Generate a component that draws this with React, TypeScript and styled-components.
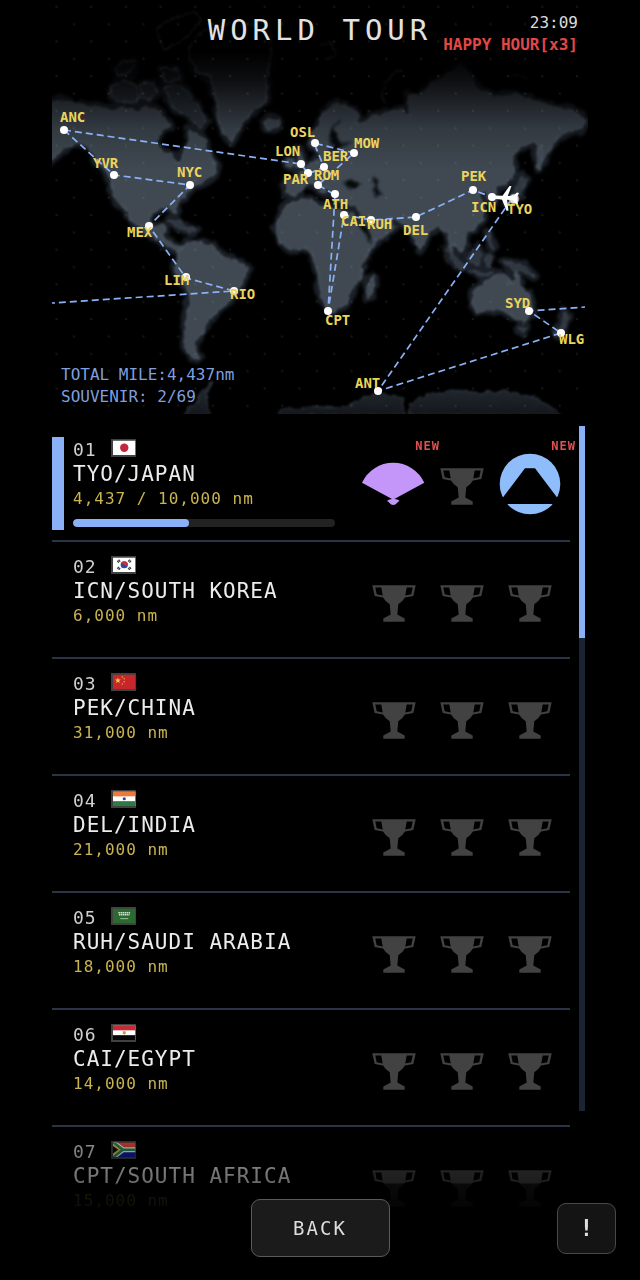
import React from "react";
import styled, { createGlobalStyle } from "styled-components";

const GlobalStyle = createGlobalStyle`
  * { box-sizing: border-box; }
  body {
    margin: 0;
    background: #000;
    color: #e6e6e6;
    font-family: "DejaVu Sans Mono", "Liberation Mono", monospace;
  }
`;

const blue = "#8ab1f8";

const Page = styled.main`
  display: flex;
  flex-direction: column;
  height: 100vh;
  padding: 0 52px 70px;
  overflow: hidden;
`;

/* The map and the text that lies on it share one grid cell. */
const MapPanel = styled.header`
  display: grid;
  grid-template-columns: minmax(0, 1fr);
  margin-bottom: 11px;
  flex: none;
  > * { grid-area: 1 / 1; }
`;

const MapArt = styled.svg`
  display: block;
  width: 100%;
  height: auto;
`;

const CityName = styled.text`
  font-size: 14px;
  font-weight: 700;
  fill: #ecd45c;
`;

const TopText = styled.div`
  position: relative;
  align-self: start;
  padding-top: 13px;
`;

const Title = styled.h1`
  margin: 0;
  font-size: 29px;
  line-height: 34px;
  font-weight: 400;
  letter-spacing: 5px;
  text-align: center;
  color: #e2e2e2;
`;

const Clock = styled.div`
  position: absolute;
  top: 12px;
  right: 10px;
  text-align: right;
  font-size: 16px;
  line-height: 22px;
  color: #dcdcdc;
`;

const HappyHour = styled.strong`
  display: block;
  color: #e04848;
`;

const Totals = styled.div`
  position: relative;
  align-self: end;
  padding: 0 0 6px 9px;
  font-size: 16px;
  line-height: 22px;
  color: #7f9fdf;
`;

const ListPanel = styled.section`
  display: grid;
  grid-template-columns: minmax(0, 1fr) 6px;
  flex: 1;
  min-height: 0;
  padding-right: 3px;
`;

const List = styled.ul`
  margin: 0;
  padding: 0 9px 0 0;
  list-style: none;
  min-height: 0;
  overflow-x: hidden;
  overflow-y: auto;
  scrollbar-width: none;
  mask-image: linear-gradient(
    to bottom,
    #000 calc(100% - 82px),
    rgba(0, 0, 0, 0.65) calc(100% - 64px),
    rgba(0, 0, 0, 0.45) calc(100% - 27px),
    rgba(0, 0, 0, 0.14) calc(100% - 26px),
    rgba(0, 0, 0, 0.08) calc(100% - 4px),
    transparent 100%
  );
`;

const ScrollTrack = styled.div`
  margin: 1px 0 99px;
  background: #1b2432;
`;

const ScrollThumb = styled.div`
  height: 31%;
  background: ${blue};
`;

const Row = styled.li`
  display: grid;
  grid-template-columns: 12px minmax(0, 1fr) auto;
  height: 117px;
  border-bottom: 2px solid #2b3346;
`;

const Marker = styled.span<{ $active: boolean }>`
  margin: 12px 0 10px;
  background: ${(p) => (p.$active ? blue : "transparent")};
`;

const Info = styled.div`
  padding: 14px 0 0 9px;
  white-space: nowrap;
`;

const Head = styled.div`
  display: flex;
  gap: 14px;
  font-size: 18px;
  line-height: 22px;
  letter-spacing: 1px;
  color: #cfcfcf;
`;

const FlagArt = styled.svg`
  width: 25px;
  height: 18px;
`;

const Name = styled.h2`
  margin: 0;
  font-size: 21px;
  line-height: 26px;
  font-weight: 400;
  letter-spacing: 1px;
  color: #ececec;
`;

const Miles = styled.div`
  font-size: 16px;
  line-height: 24px;
  letter-spacing: 1px;
  color: #c9b450;
`;

const Bar = styled.div`
  width: 262px;
  max-width: 100%;
  height: 8px;
  margin-top: 8px;
  border-radius: 4px;
  background: #222;
  overflow: hidden;
`;

const BarFill = styled.div`
  height: 100%;
  border-radius: 4px;
  background: ${blue};
`;

const Souvenirs = styled.div`
  display: flex;
  padding: 27px 6px 0 0;
`;

const Slot = styled.span`
  position: relative;
  width: 68px;
  height: 64px;
  display: grid;
  justify-items: center;
`;

const Icon = styled.svg`
  width: 64px;
  height: 64px;
`;

const NewBadge = styled.b`
  position: absolute;
  top: -12px;
  right: -12px;
  font-size: 12px;
  line-height: 12px;
  letter-spacing: 1px;
  color: #e05252;
`;

const Footer = styled.footer`
  position: fixed;
  left: 0;
  right: 0;
  bottom: 23px;
  padding: 0 24px;
  display: grid;
  grid-template-columns: 1fr auto 1fr;
  align-items: center;
`;

const PanelButton = styled.button<{ $wide?: boolean }>`
  grid-column: ${(p) => (p.$wide ? 2 : 3)};
  justify-self: ${(p) => (p.$wide ? "center" : "end")};
  width: ${(p) => (p.$wide ? 139 : 59)}px;
  height: ${(p) => (p.$wide ? 58 : 51)}px;
  padding: 0;
  border: 1px solid ${(p) => (p.$wide ? "#5a5a5a" : "#484848")};
  border-radius: 9px;
  background: ${(p) => (p.$wide ? "#1b1b1b" : "#141414")};
  color: #dedede;
  font-family: inherit;
  font-size: ${(p) => (p.$wide ? 19 : 23)}px;
  font-weight: ${(p) => (p.$wide ? 400 : 700)};
  letter-spacing: ${(p) => (p.$wide ? 2 : 0)}px;
`;

/* Map coordinates: x 52 to 588, y 0 to 414. */
const routes: [number, number][][] = [
  [[64, 130], [301, 164], [308, 174], [324, 167], [314, 143], [354, 153], [318, 185], [335, 195], [328, 311], [344, 215], [371, 220], [416, 217], [473, 190], [492, 197], [511, 200], [378, 391], [561, 333], [529, 311], [585, 307]],
  [[64, 130], [114, 175], [190, 185], [149, 226], [186, 278], [234, 291], [52, 303]],
];

type City = { code: string; x: number; y: number; tx: number; ty: number };
const cities: City[] = [
  { code: "ANC", x: 64, y: 130, tx: 60, ty: 122 },
  { code: "YVR", x: 114, y: 175, tx: 93, ty: 168 },
  { code: "NYC", x: 190, y: 185, tx: 177, ty: 177 },
  { code: "MEX", x: 149, y: 226, tx: 127, ty: 237 },
  { code: "LIM", x: 186, y: 277, tx: 164, ty: 285 },
  { code: "RIO", x: 234, y: 291, tx: 230, ty: 299 },
  { code: "OSL", x: 315, y: 143, tx: 290, ty: 137 },
  { code: "LON", x: 301, y: 164, tx: 275, ty: 156 },
  { code: "BER", x: 324, y: 167, tx: 323, ty: 161 },
  { code: "MOW", x: 354, y: 153, tx: 354, ty: 148 },
  { code: "PAR", x: 308, y: 173, tx: 283, ty: 184 },
  { code: "ROM", x: 318, y: 185, tx: 314, ty: 180 },
  { code: "ATH", x: 335, y: 194, tx: 323, ty: 209 },
  { code: "CAI", x: 344, y: 215, tx: 341, ty: 226 },
  { code: "RUH", x: 371, y: 220, tx: 367, ty: 229 },
  { code: "DEL", x: 416, y: 217, tx: 403, ty: 235 },
  { code: "PEK", x: 473, y: 190, tx: 461, ty: 181 },
  { code: "ICN", x: 492, y: 197, tx: 471, ty: 212 },
  { code: "TYO", x: 514, y: 199, tx: 507, ty: 214 },
  { code: "CPT", x: 328, y: 311, tx: 325, ty: 325 },
  { code: "SYD", x: 529, y: 311, tx: 505, ty: 308 },
  { code: "WLG", x: 561, y: 333, tx: 559, ty: 344 },
  { code: "ANT", x: 378, y: 391, tx: 355, ty: 388 },
];

const arctic = [
  "M165 88L176 85L186 90L192 100L200 108L206 120L200 128L192 120L184 113L174 108L168 98Z",
  "M112 86L122 80L134 84L140 96L136 103L118 101L111 96Z",
  "M115 70L124 60L136 62L130 74L118 76Z",
  "M140 85L152 82L158 92L150 100L142 97Z",
  "M160 68L178 69L180 79L166 82Z",
  "M156 30L172 18L196 12L200 22L188 36L176 44L164 50Z",
];

const greenland =
  "M188 48L205 30L240 20L272 34L270 60L266 80L266 102L250 114L240 126L232 143L224 134L218 120L216 100L210 76L197 72L190 60Z";

const land = [
  greenland,
  /* North and Central America */
  "M48 103L62 100L75 104L88 107L102 107L112 111L124 107L136 111L146 106L156 110L164 118L170 126L160 133L156 142L161 150L172 155L177 163L182 160L183 150L190 142L188 130L196 134L205 140L206 150L215 162L217 172L207 179L200 184L192 187L184 197L177 204L176 213L172 211L168 206L158 210L152 212L150 222L155 228L164 224L165 230L160 233L165 240L177 246L183 249L178 251L168 246L160 240L147 234L138 226L131 220L126 210L120 204L114 196L111 186L111 178L104 168L97 162L93 152L86 146L78 142L70 146L62 150L54 158L48 162Z",
  /* Iceland */
  "M264 122L270 119L279 121L278 127L270 131L265 128Z",
  /* South America */
  "M178 252L187 242L200 243L213 246L223 257L235 260L247 267L245 276L238 290L228 302L217 312L208 321L202 334L195 341L195 351L199 358L191 357L185 347L185 332L188 312L191 294L183 282L175 269L178 260Z",
  /* Europe and Asia */
  "M309 145L311 135L318 126L324 112L337 103L352 109L359 117L356 124L366 122L372 116L388 113L402 109L409 116L409 94L420 97L430 84L450 74L460 64L471 76L477 88L496 97L512 94L533 100L553 107L572 110L587 120L582 128L569 131L557 138L551 148L543 160L538 168L536 154L537 141L522 146L511 157L514 165L514 174L506 184L497 186L495 194L494 202L489 199L486 191L479 192L480 200L484 208L482 220L472 230L464 235L466 244L461 252L456 247L453 244L452 253L456 262L451 258L448 242L446 231L438 227L430 231L424 242L420 249L414 238L409 227L400 222L388 217L395 227L386 236L372 240L366 228L360 217L358 207L343 202L336 200L331 192L324 187L326 194L320 191L313 184L304 185L301 191L295 196L286 193L286 181L298 180L299 173L308 167L316 160L320 159L318 150Z",
  /* British Isles */
  "M297 150L302 155L305 166L295 168L298 160Z",
  "M287 160L293 159L292 167L287 166Z",
  /* Africa */
  "M293 201L312 199L318 206L330 208L342 211L353 213L359 228L367 238L377 240L371 250L361 263L362 276L352 289L347 303L334 312L327 310L320 290L320 276L314 263L313 253L306 248L290 250L279 240L275 227L283 210Z",
  /* Madagascar */
  "M375 275L372 292L368 298L367 287L370 280Z",
  /* Sakhalin */
  "M540 146L543 158L539 170L537 158Z",
  /* Australia */
  "M472 292L480 286L490 278L500 273L508 277L512 285L517 271L521 285L530 298L532 311L524 322L513 317L504 309L488 310L477 313L473 305Z",
];

/* Small islands are drawn in a dimmer tone than the continents. */
const islands = [
  ...arctic,
  /* Japan */
  "M520 176L527 179L522 186L520 196L508 203L512 196L518 186Z",
  /* Indonesia, the Philippines and New Guinea */
  "M446 248L456 257L466 268L462 270L452 260Z",
  "M468 271L482 272L494 274L482 276Z",
  "M468 257L478 248L482 254L477 265L470 264Z",
  "M487 232L491 238L494 250L490 246Z",
  "M486 256L492 258L488 268L485 265Z",
  "M503 261L512 263L524 265L534 276L523 272L512 270Z",
  /* Tasmania and New Zealand */
  "M519 327L526 327L522 334Z",
  "M564 312L569 318L565 325L558 336L554 334L562 325Z",
  /* West Indies */
  "M168 220L180 222L188 228L198 229L190 232L178 227Z",
];

const antarctica = [
  "M278 416L284 409L300 409L310 406L322 407L340 408L353 404L363 398L380 393L403 397L404 408L405 416Z",
  "M408 416L410 404L427 395L440 393L453 390L480 393L507 391L520 394L533 397L546 403L562 416Z",
  "M184 416L188 408L198 402L202 390L214 381L206 394L208 408L210 416Z",
];

const seas = [
  "M344 184L350 179L354 182L361 184L356 188L346 187Z",
  "M373 177L379 180L377 187L381 195L376 196L374 188Z",
  "M340 120L334 128L336 136L342 143L352 142L340 148L334 152L327 152L332 146L329 136L332 127Z",
  "M366 226L372 238L370 242L362 230L359 218Z",
];

const region = { x: 40, y: -10, width: 560, height: 440 };

function WorldMap() {
  return (
    <MapArt viewBox="52 0 536 414" role="img" aria-label="Route map">
      <defs>
        <linearGradient id="fade" x1="0" x2="0" y1="0" y2="200" gradientUnits="userSpaceOnUse">
          <stop offset="0.26" stopColor="#fff" stopOpacity="0" />
          <stop offset="0.4" stopColor="#fff" stopOpacity="0.2" />
          <stop offset="0.52" stopColor="#fff" stopOpacity="0.5" />
          <stop offset="0.65" stopColor="#fff" stopOpacity="0.8" />
          <stop offset="0.85" stopColor="#fff" />
        </linearGradient>
        <linearGradient id="ice" x1="0" x2="0" y1="390" y2="414" gradientUnits="userSpaceOnUse">
          <stop offset="0" stopColor="#20262e" />
          <stop offset="1" stopColor="#14181d" />
        </linearGradient>
        <mask id="top" maskUnits="userSpaceOnUse" {...region}>
          <rect {...region} fill="url(#fade)" />
        </mask>
        <filter id="coast" filterUnits="userSpaceOnUse" colorInterpolationFilters="sRGB" {...region}>
          <feTurbulence type="fractalNoise" baseFrequency="0.13" numOctaves="2" seed="4" result="n" />
          <feDisplacementMap in="SourceGraphic" in2="n" scale="6" xChannelSelector="R" yChannelSelector="G" result="d" />
          <feGaussianBlur in="d" stdDeviation="0.8" />
        </filter>
        <filter id="soft" filterUnits="userSpaceOnUse" colorInterpolationFilters="sRGB" {...region}>
          <feTurbulence type="fractalNoise" baseFrequency="0.1" numOctaves="2" seed="9" result="n" />
          <feDisplacementMap in="SourceGraphic" in2="n" scale="9" xChannelSelector="R" yChannelSelector="G" result="d" />
          <feGaussianBlur in="d" stdDeviation="1.4" />
        </filter>
        <pattern id="dots" x="65.4" y="15.6" width="34.7" height="34.7" patternUnits="userSpaceOnUse">
          <circle cx="8.6" cy="8.6" r="1.1" fill="#9db4a8" opacity="0.14" />
          <circle cx="25.9" cy="26" r="1.1" fill="#9db4a8" opacity="0.14" />
        </pattern>
      </defs>
      <g mask="url(#top)">
        <g filter="url(#soft)" fill="none" stroke="#1b2027" strokeWidth="9" strokeLinejoin="round">
          {land.map((d) => <path key={d} d={d} />)}
          {islands.map((d) => <path key={d} d={d} />)}
        </g>
        <g filter="url(#coast)">
          <g fill="#404952" stroke="#515b66" strokeWidth="1.2" strokeLinejoin="round">
            {land.map((d) => <path key={d} d={d} />)}
          </g>
          <g fill="#2f363f" stroke="#414a54" strokeWidth="1">
            {islands.map((d) => <path key={d} d={d} />)}
          </g>
          <g fill="#07090b" stroke="#272e36" strokeWidth="2">
            {seas.map((d) => <path key={d} d={d} />)}
          </g>
          <g fill="url(#ice)" stroke="#363d46" strokeWidth="1">
            {antarctica.map((d) => <path key={d} d={d} />)}
          </g>
        </g>
      </g>
      <g filter="url(#coast)" fill="none" stroke="#596372" strokeWidth="0.9" opacity="0.28">
        {arctic.map((d) => <path key={d} d={d} />)}
        <path d={greenland} />
        <path d="M384 103L382 92L390 77L402 69M320 45L330 42L336 52L326 62M440 40L450 48M508 76L520 74L526 80" />
      </g>
      <rect x="52" y="0" width="536" height="414" fill="url(#dots)" />
      <g fill="none" stroke={blue} strokeWidth="1.7" strokeDasharray="7 4">
        {routes.map((r) => <polyline key={r.length} points={r.join(" ")} />)}
      </g>
      {cities.map((c) => <circle key={c.code} cx={c.x} cy={c.y} r="4" fill="#fff" />)}
      {cities.map((c) => <CityName key={c.code} x={c.tx} y={c.ty}>{c.code}</CityName>)}
      <g fill="#fff">
        <circle cx="514" cy="199" r="4.800" fill="#e4e4dc" stroke="#99998f" strokeWidth="0.8" />
        <path d="M489.500 197Q491 195 495 195.500L502.500 195.800L509.500 186L511.500 186L507.800 196L513 196L517 192.500L519 193L516.500 198L518 204L516 204L512.500 200L507 199.800L508.500 210.800L506.500 210.800L502 199.600L495 199Q491 199 489.500 197Z" />
      </g>
    </MapArt>
  );
}

const flagArt: Record<string, React.ReactNode> = {
  Japan: (<><rect width="23" height="15" fill="#fff" /><circle cx="11.500" cy="7.500" r="4.300" fill="#c4263a" /></>),
  "South Korea": (
    <>
      <rect width="23" height="15" fill="#fff" />
      <circle cx="11.500" cy="7.500" r="3.700" fill="#2b4a9b" />
      <path d="M8.400 5.600A3.700 3.700 0 0 1 15.200 7.800Q13.500 9.500 11.500 7.500T8.400 5.600Z" fill="#c9303e" />
      <path d="M4.700 4.800L7.200 2.800M15.800 2.800L18.300 4.800M4.700 10.200L7.200 12.200M15.800 12.200L18.300 10.200" stroke="#3a3a3a" strokeWidth="2.600" strokeDasharray="1.300 0.400" />
    </>
  ),
  China: (
    <>
      <rect width="23" height="15" fill="#c8262d" />
      <path d="M5 3L5.800 5.200L8 5.300L6.200 6.700L6.900 9L5 7.600L3.100 9L3.800 6.700L2 5.300L4.200 5.200Z" fill="#f3c84a" />
      <g fill="#e8a53f"><circle cx="9.500" cy="2.500" r="0.800" /><circle cx="11.500" cy="4.500" r="0.800" /><circle cx="11.500" cy="7.500" r="0.800" /><circle cx="9.500" cy="9.800" r="0.800" /></g>
    </>
  ),
  India: (<><rect width="23" height="15" fill="#fff" /><rect width="23" height="5" fill="#ec7a3b" /><rect y="10" width="23" height="5" fill="#2d7a45" /><circle cx="11.500" cy="7.500" r="1.600" fill="#3a3f96" /></>),
  "Saudi Arabia": (<><rect width="23" height="15" fill="#2c6a31" /><path d="M5.500 4.500H17.500M6 6.500H17" stroke="#cfe0cf" strokeWidth="1.600" strokeDasharray="1.600 0.500" /><path d="M7.500 10.500H15.500" stroke="#b5ceb5" strokeWidth="0.900" /></>),
  Egypt: (<><rect width="23" height="15" fill="#fff" /><rect width="23" height="5" fill="#c42b33" /><rect y="10" width="23" height="5" fill="#050505" /><path d="M10 6H13V8L11.500 9.500L10 8Z" fill="#c9963a" /></>),
  "South Africa": (
    <>
      <rect width="23" height="7.500" fill="#f0493d" />
      <rect y="7.500" width="23" height="7.500" fill="#1020a0" />
      <path d="M0 0L10 7.500L0 15M9 7.500H23" fill="none" stroke="#fff" strokeWidth="5.400" />
      <path d="M-1 2L6.500 7.500L-1 13Z" fill="#111" stroke="#f0c040" strokeWidth="1.600" />
      <path d="M0 -0.500L10 7.500L0 15.500M9 7.500H23" fill="none" stroke="#2e9059" strokeWidth="2.800" />
    </>
  ),
};

function Flag({ country }: { country: string }) {
  return (
    <FlagArt viewBox="0 0 25 18" role="img" aria-label={`Flag of ${country}`}>
      <rect width="25" height="18" fill="#414141" />
      <svg x="2" y="1.500" width="22.500" height="14.500" viewBox="0 0 23 15" preserveAspectRatio="none">
        {flagArt[country]}
      </svg>
    </FlagArt>
  );
}

type Item = "trophy" | "fan" | "fuji";

function Souvenir({ item }: { item: Item }) {
  return (
    <Slot>
      <Icon viewBox="0 0 64 64" aria-hidden="true">
        {item === "trophy" && (
          <path
            fill="#424242"
            fillRule="evenodd"
            d="M10.300 16.300H53.700L51.300 27L43 28.600L40.300 32L36.300 35.300L35.300 45.600L42.700 49.600V52.800H21.300V49.600L28.700 45.600L27.700 35.300L23.700 32L21 28.600L12.700 27ZM13.300 18.600L14.700 25.300L20.700 26.600L19.300 18.600ZM50.700 18.600L49.300 25.300L43.300 26.600L44.700 18.600Z"
          />
        )}
        {item === "fan" && (
          <path fill="#c596fa" d="M0 30.700A34.300 34.300 0 0 1 62.300 30.700L32.300 47Q36.500 47.300 37.500 49Q35.500 50 35 51Q33.500 53 31.200 53T27.500 51Q27 50 25 49Q26 47.300 30 47Z" />
        )}
        {item === "fuji" && (
          <>
            <circle cx="32" cy="32" r="30.300" fill="#8fbcfa" />
            <path d="M27 16.300H37L59.500 46L64 44V52H0V44L4.500 46Z" fill="#000" />
          </>
        )}
      </Icon>
      {item !== "trophy" && <NewBadge>NEW</NewBadge>}
    </Slot>
  );
}

type Stop = { code: string; country: string; goal: number; done?: number; items?: Item[] };
const stops: Stop[] = [
  { code: "TYO", country: "Japan", goal: 10000, done: 4437, items: ["fan", "trophy", "fuji"] },
  { code: "ICN", country: "South Korea", goal: 6000 },
  { code: "PEK", country: "China", goal: 31000 },
  { code: "DEL", country: "India", goal: 21000 },
  { code: "RUH", country: "Saudi Arabia", goal: 18000 },
  { code: "CAI", country: "Egypt", goal: 14000 },
  { code: "CPT", country: "South Africa", goal: 15000 },
];

const locked: Item[] = ["trophy", "trophy", "trophy"];
const num = (n: number) => n.toLocaleString("en-US");

export default function App() {
  return (
    <>
      <GlobalStyle />
      <Page>
        <MapPanel>
          <WorldMap />
          <TopText>
            <Title>WORLD TOUR</Title>
            <Clock>
              23:09
              <HappyHour>HAPPY HOUR[x3]</HappyHour>
            </Clock>
          </TopText>
          <Totals>
            <div>TOTAL MILE:4,437nm</div>
            <div>SOUVENIR: 2/69</div>
          </Totals>
        </MapPanel>
        <ListPanel>
          <List>
            {stops.map((s, i) => (
              <Row key={s.code}>
                <Marker $active={i === 0} />
                <Info>
                  <Head>
                    <span>{String(i + 1).padStart(2, "0")}</span>
                    <Flag country={s.country} />
                  </Head>
                  <Name>{`${s.code}/${s.country.toUpperCase()}`}</Name>
                  <Miles>{s.done ? `${num(s.done)} / ${num(s.goal)} nm` : `${num(s.goal)} nm`}</Miles>
                  {s.done && (
                    <Bar>
                      <BarFill style={{ width: `${(s.done / s.goal) * 100}%` }} />
                    </Bar>
                  )}
                </Info>
                <Souvenirs>
                  {(s.items ?? locked).map((item, k) => <Souvenir key={k} item={item} />)}
                </Souvenirs>
              </Row>
            ))}
          </List>
          <ScrollTrack>
            <ScrollThumb />
          </ScrollTrack>
        </ListPanel>
      </Page>
      <Footer>
        <PanelButton $wide type="button">BACK</PanelButton>
        <PanelButton type="button" aria-label="Information">!</PanelButton>
      </Footer>
    </>
  );
}
